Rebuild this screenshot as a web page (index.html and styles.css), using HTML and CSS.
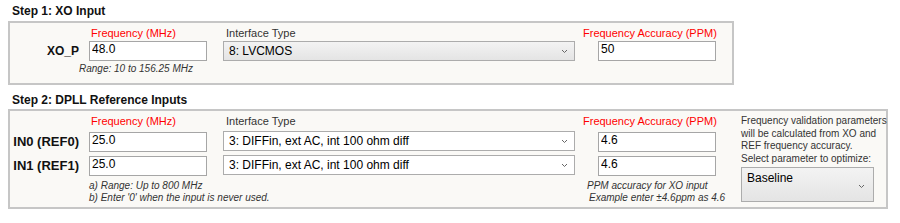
FILE: index.html
```html
<!DOCTYPE html>
<html>
<head>
<meta charset="utf-8">
<link rel="stylesheet" href="styles.css">
</head>
<body>
<div class="page">
  <div class="step-title step-first">Step 1: XO Input</div>
  <div class="panel panel-xo">
    <div class="grid grid-xo">
      <div class="hdr hdr-red hdr-freq">Frequency (MHz)</div>
      <div class="hdr hdr-type">Interface Type</div>
      <div class="hdr hdr-red hdr-ppm">Frequency Accuracy (PPM)</div>
      <div class="row-label lbl-xo">XO_P</div>
      <input class="num col-freq" value="48.0">
      <div class="dd dd-grad col-type"><span>8: LVCMOS</span><svg class="chev" width="7" height="5" viewBox="0 0 7 5"><path d="M1 1L3.5 3.5L6 1" fill="none" stroke="#666" stroke-width="1"/></svg></div>
      <input class="num col-ppm" value="50">
      <div class="note range">Range: 10 to 156.25 MHz</div>
    </div>
  </div>

  <div class="step-title step-second">Step 2: DPLL Reference Inputs</div>
  <div class="panel panel-dpll">
    <div class="grid grid-dpll">
      <div class="hdr hdr-red hdr-freq">Frequency (MHz)</div>
      <div class="hdr hdr-type">Interface Type</div>
      <div class="hdr hdr-red hdr-ppm">Frequency Accuracy (PPM)</div>

      <div class="row-label lbl-in r2">IN0 (REF0)</div>
      <input class="num col-freq r2" value="25.0">
      <div class="dd col-type r2"><span>3: DIFFin, ext AC, int 100 ohm diff</span><svg class="chev" width="7" height="5" viewBox="0 0 7 5"><path d="M1 1L3.5 3.5L6 1" fill="none" stroke="#666" stroke-width="1"/></svg></div>
      <input class="num col-ppm r2" value="4.6">

      <div class="row-label lbl-in r3">IN1 (REF1)</div>
      <input class="num col-freq r3" value="25.0">
      <div class="dd col-type r3"><span>3: DIFFin, ext AC, int 100 ohm diff</span><svg class="chev" width="7" height="5" viewBox="0 0 7 5"><path d="M1 1L3.5 3.5L6 1" fill="none" stroke="#666" stroke-width="1"/></svg></div>
      <input class="num col-ppm r3" value="4.6">

      <div class="note notes-freq">a) Range: Up to 800 MHz<br>b) Enter '0' when the input is never used.</div>
      <div class="note notes-ppm"><div class="pn1">PPM accuracy for XO input</div><div class="pn2">Example enter ±4.6ppm as 4.6</div></div>

      <div class="side">
        <div class="side-text">Frequency validation parameters<br>will be calculated from XO and<br>REF frequency accuracy.<br>Select parameter to optimize:</div>
        <div class="dd dd-grad dd-tall"><span>Baseline</span><svg class="chev" width="7" height="5" viewBox="0 0 7 5"><path d="M1 1L3.5 3.5L6 1" fill="none" stroke="#666" stroke-width="1"/></svg></div>
      </div>
    </div>
  </div>
</div>
</body>
</html>
```

FILE: styles.css
```css
body {
  margin: 0;
  background: #ffffff;
  font-family: "Liberation Sans", Arial, sans-serif;
  color: #222222;
}

.page {
  padding: 0 8px;
}

.step-title {
  font-size: 12px;
  font-weight: bold;
  line-height: 16px;
  padding-left: 4px;
  color: #111111;
}

.step-first {
  margin-top: 3px;
  margin-bottom: 2px;
}

.step-second {
  margin-top: 7px;
  margin-bottom: 1px;
}

.panel {
  background: #faf9f6;
  border: 2px solid #c6c6c6;
  box-sizing: border-box;
}

.panel-xo {
  width: 726px;
  padding: 4px 0 7px;
}

.panel-dpll {
  width: 880px;
  padding: 4px 0 3px;
}

.grid {
  display: grid;
}

.grid-xo {
  grid-template-columns: 79px 134px 360px 149px;
  grid-template-rows: 13px 21px auto;
}

.grid-dpll {
  grid-template-columns: 79px 134px 360px 158px 145px;
  grid-template-rows: 13px 24px 24px auto;
}

.hdr {
  font-size: 11px;
  line-height: 13px;
  white-space: nowrap;
  grid-row: 1;
}

.hdr-red {
  color: #ff0000;
}

.hdr-freq {
  grid-column: 2;
  padding-left: 2px;
}

.hdr-type {
  grid-column: 3;
  padding-left: 3px;
  color: #333333;
}

.hdr-ppm {
  grid-column: 4;
}

.row-label {
  grid-column: 1;
  text-align: right;
  padding-right: 10px;
  font-weight: bold;
  color: #111111;
  white-space: nowrap;
}

.lbl-xo {
  grid-row: 2;
  font-size: 12px;
  align-self: end;
  line-height: 20px;
}

.lbl-in {
  font-size: 13px;
  align-self: end;
  line-height: 19px;
  padding-bottom: 1px;
}

.r2 {
  grid-row: 2;
}

.r3 {
  grid-row: 3;
}

.num {
  width: 118px;
  height: 20px;
  box-sizing: border-box;
  margin: 0;
  border: 1px solid #a6a6a6;
  padding: 0 2px 4px;
  font-family: "Liberation Sans", Arial, sans-serif;
  font-size: 12px;
  color: #000000;
  background: #ffffff;
  align-self: end;
  outline: none;
}

.grid-xo .num,
.grid-xo .dd {
  grid-row: 2;
}

.col-freq {
  grid-column: 2;
}

.col-type {
  grid-column: 3;
}

.col-ppm {
  grid-column: 4;
  margin-left: 15px;
}

.dd {
  display: flex;
  align-items: center;
  justify-content: space-between;
  width: 352px;
  height: 20px;
  box-sizing: border-box;
  border: 1px solid #acacac;
  padding: 0 6px 0 5px;
  font-size: 12px;
  color: #000000;
  background: #ffffff;
  align-self: end;
  white-space: nowrap;
}

.grid-dpll .dd.col-type {
  margin-bottom: 1px;
}

.dd-grad {
  background: linear-gradient(#f3f3f3, #e4e4e4);
}

.chev {
  flex: none;
  display: block;
}

.note {
  font-size: 10px;
  font-style: italic;
  color: #333333;
  white-space: nowrap;
}

.range {
  grid-column: 1 / 3;
  grid-row: 3;
  padding-left: 69px;
  margin-top: 1px;
  line-height: 14px;
}

.notes-freq {
  grid-column: 2 / 4;
  grid-row: 4;
  margin-top: 4px;
  line-height: 12px;
}

.notes-ppm {
  grid-column: 4;
  grid-row: 4;
  margin-top: 4px;
  line-height: 12px;
}

.pn1 {
  padding-left: 4px;
}

.pn2 {
  padding-left: 6px;
}

.side {
  grid-column: 5;
  grid-row: 1 / 5;
  display: flex;
  flex-direction: column;
  align-items: flex-start;
}

.side-text {
  font-size: 10px;
  line-height: 12.5px;
  color: #333333;
  white-space: nowrap;
}

.dd-tall {
  width: 133px;
  height: 35px;
  margin-top: 2px;
  align-self: flex-start;
  align-items: flex-start;
  padding: 3px 8px 0 5px;
  font-size: 12px;
  line-height: 14px;
}

.dd-tall .chev {
  align-self: center;
  margin-top: 0;
}
```
